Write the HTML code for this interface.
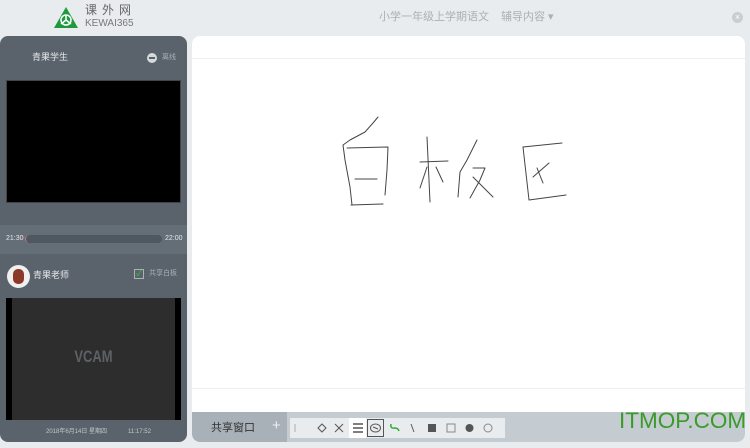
<!DOCTYPE html><html><head><meta charset="utf-8"><style>
*{margin:0;padding:0;box-sizing:border-box}
body{width:750px;height:448px;background:#e9ecef;position:relative;overflow:hidden;font-family:"Liberation Sans","Noto Sans CJK SC",sans-serif}
.a{position:absolute;line-height:1.1}
</style></head><body>
<svg class="a" style="left:53px;top:6px" width="26" height="24" viewBox="0 0 26 24"><path d="M13 1L25 22H1Z" fill="#1d9a3e"/><circle cx="13" cy="14" r="5" fill="none" stroke="#fff" stroke-width="1.5"/><path d="M13 9V14M13 14L8 18M13 14L18 18" stroke="#fff" stroke-width="1.5"/></svg>
<div class="a" style="left:85px;top:4px;font-size:12px;color:#666;letter-spacing:5px">课外网</div>
<div class="a" style="left:85px;top:18px;font-size:10px;color:#777">KEWAI365</div>
<div class="a" style="left:379px;top:11px;font-size:11px;color:#aab0b5">小学一年级上学期语文</div>
<div class="a" style="left:501px;top:11px;font-size:11px;color:#aab0b5">辅导内容 ▾</div>
<div class="a" style="left:732px;top:12px;width:11px;height:11px;border-radius:50%;background:#c9ced2;color:#fff;font-size:9px;line-height:11px;text-align:center">×</div>

<div class="a" style="left:0;top:36px;width:187px;height:406px;background:#5a636b;border-radius:8px;overflow:hidden">
 <div class="a" style="left:32px;top:17px;font-size:9px;color:#e6e9ec">青果学生</div>
 <div class="a" style="left:147px;top:17px;width:10px;height:10px;border-radius:50%;background:#d5d9dc"><div style="margin:4px 2px;height:2px;background:#5a636b"></div></div>
 <div class="a" style="left:162px;top:18px;font-size:7px;color:#aab1b7">离线</div>
 <div class="a" style="left:6px;top:44px;width:175px;height:123px;background:#000;border:1px solid #444"></div>
 <div class="a" style="left:0;top:189px;width:187px;height:29px;background:#646e77"></div>
 <div class="a" style="left:6px;top:199px;font-size:7px;color:#e6e9ec">21:30</div>
 <div class="a" style="left:25px;top:199px;width:137px;height:8px;border-radius:4px;background:#4f5861;border-left:1px solid #c77"></div>
 <div class="a" style="left:165px;top:199px;font-size:7px;color:#e6e9ec">22:00</div>
 <div class="a" style="left:7px;top:229px;width:23px;height:23px;border-radius:50%;background:#f0f0f0;overflow:hidden"><div style="margin:4px 6px;width:11px;height:15px;background:#8b3a2a;border-radius:5px"></div></div>
 <div class="a" style="left:33px;top:235px;font-size:9px;color:#e6e9ec">青果老师</div>
 <div class="a" style="left:134px;top:233px;width:10px;height:10px;border:1px solid #aab1b7;color:#3c3;font-size:8px;line-height:8px;text-align:center">✓</div>
 <div class="a" style="left:149px;top:234px;font-size:7px;color:#aab1b7">共享白板</div>
 <div class="a" style="left:6px;top:262px;width:175px;height:122px;background:#2d2d2d;border-left:6px solid #000;border-right:6px solid #000"></div>
 <div class="a" style="left:6px;top:314px;width:175px;text-align:center;font-size:13px;font-weight:bold;color:#5d6166;transform:scaleY(1.3)">VCAM</div>
 <div class="a" style="left:46px;top:393px;font-size:6px;color:#c2c8cc">2018年6月14日 星期四</div>
 <div class="a" style="left:128px;top:393px;font-size:6px;color:#c2c8cc">11:17:52</div>
</div>

<div class="a" style="left:192px;top:36px;width:553px;height:406px;background:#fff;border-radius:8px;overflow:hidden">
 <div class="a" style="left:0;top:22px;width:553px;height:1px;background:#edf0f2"></div>
 <div class="a" style="left:0;top:352px;width:553px;height:1px;background:#edf0f2"></div>
 <div class="a" style="left:0;top:376px;width:95px;height:30px;background:#a9b1b8"></div>
 <div class="a" style="left:95px;top:376px;width:458px;height:30px;background:#c5ccd1"></div>
 <div class="a" style="left:19px;top:386px;font-size:11px;color:#333">共享窗口</div>
 <div class="a" style="left:80px;top:382px;font-size:15px;color:#eee">+</div>
 <div class="a" style="left:98px;top:382px;width:215px;height:20px;background:#e9ecee"></div>
 <div class="a" style="left:157px;top:382px;width:17px;height:20px;background:#fff"></div>
 <div class="a" style="left:175px;top:383px;width:17px;height:18px;border:1px solid #555"></div>
 <svg class="a" style="left:98px;top:382px" width="215" height="20" viewBox="98 382 215 20" fill="none" stroke="#555" stroke-width="1">
  <path d="M103 388V396" stroke="#ccc" stroke-width="2"/>
  <path d="M126 392L130 388L134 392L130 396Z"/>
  <path d="M143 388L151 396M151 388L143 396"/>
  <path d="M161 388H171M161 392H171M161 396H171" stroke-width="1.5"/>
  <ellipse cx="183.5" cy="392" rx="5" ry="4"/><path d="M181 391L186 393"/>
  <path d="M199 388Q198 393 203 392Q206 392 207 395" stroke="#3a3" stroke-width="1.5"/>
  <path d="M219 388L222 396"/>
  <rect x="236" y="388" width="8" height="8" fill="#555" stroke="none"/>
  <rect x="255" y="388" width="8" height="8" stroke="#888"/>
  <circle cx="277.5" cy="392" r="4" fill="#555" stroke="none"/>
  <circle cx="296" cy="392" r="4" stroke="#888"/>
 </svg>
</div>
<svg class="a" style="left:0;top:0" width="750" height="448" fill="none" stroke="#444" stroke-width="1" stroke-linecap="round" stroke-linejoin="round">
 <path d="M378 117L373 123L365 132L350 140L343 145L345 160L350 187L352 205"/>
 <path d="M347 148L388 147L387 170L385 195"/>
 <path d="M355 179L377 179"/><path d="M351 205L383 204"/>
 <path d="M427 137L430 202"/><path d="M420 162L448 161"/>
 <path d="M427 167L420 188"/><path d="M436 167L443 182"/>
 <path d="M477 140L467 160L460 172L458 197"/>
 <path d="M473 168L485 168L480 180L470 198"/><path d="M473 177L493 197"/>
 <path d="M523 147L562 143"/><path d="M523 147L529 200L566 195"/>
 <path d="M549 163L533 177"/><path d="M537 168L543 183"/>
</svg>
<div class="a" style="left:619px;top:409px;font-size:22.5px;color:#3a9a2a;white-space:nowrap">ITMOP.COM</div>
</body></html>
